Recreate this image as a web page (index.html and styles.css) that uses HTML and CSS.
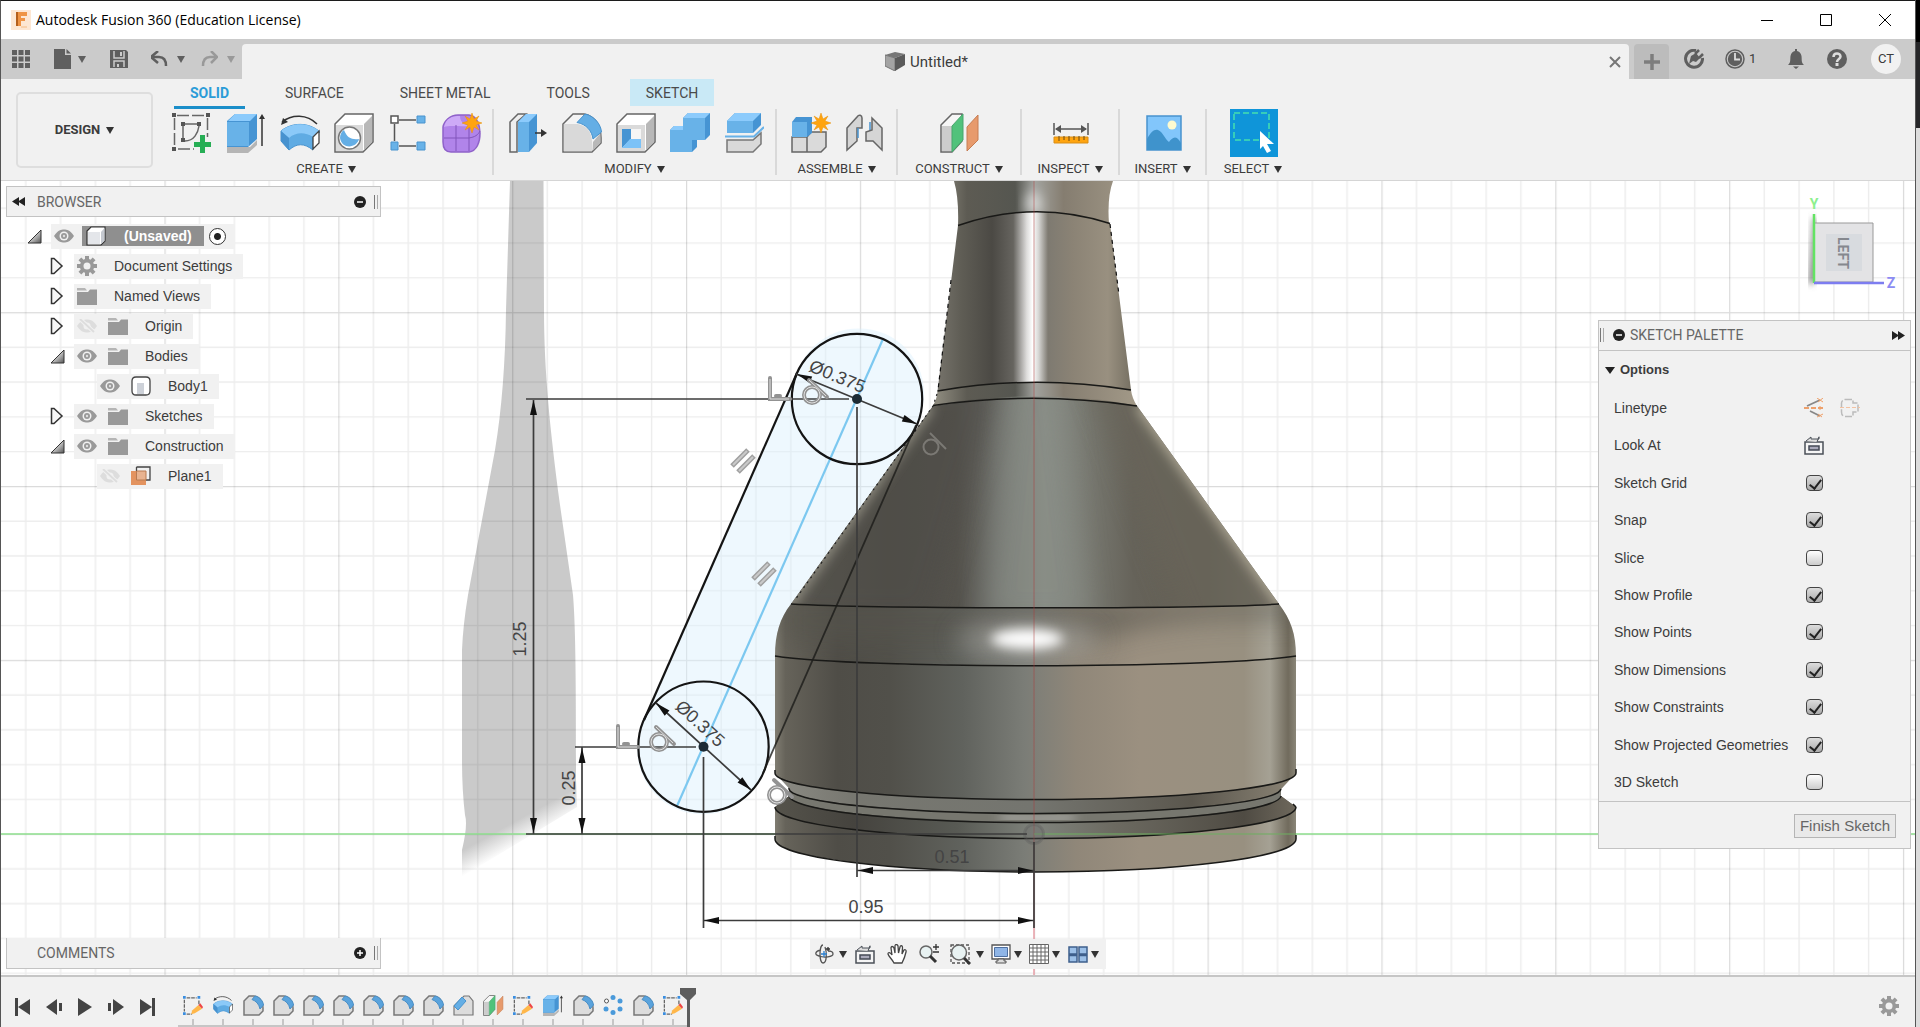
FILE: index.html
```html
<!DOCTYPE html>
<html lang="en">
<head>
<meta charset="utf-8">
<title>Autodesk Fusion 360 (Education License)</title>
<link rel="stylesheet" href="styles.css">
</head>
<body>
<svg class="defs" aria-hidden="true">
  <defs>
    <linearGradient id="tri" x1="0" y1="0" x2="1" y2="1"><stop offset="0.3" stop-color="#eee"/><stop offset="1" stop-color="#555"/></linearGradient>
    <symbol id="eye" viewBox="0 0 20 14"><path d="M0 7C4 1 7 0.500 10 0.500S16 1 20 7C16 13 13 13.500 10 13.500S4 13 0 7Z" fill="#999"/><circle cx="10" cy="7" r="4.500" fill="#f1f1f1"/><circle cx="10" cy="7" r="3" fill="#999"/><circle cx="10" cy="7" r="1.200" fill="#ddd"/></symbol>
    <symbol id="eye-off" viewBox="0 0 20 14"><path d="M0 7C4 1 7 0.500 10 0.500S16 1 20 7C16 13 13 13.500 10 13.500S4 13 0 7Z" fill="#ddd"/><circle cx="10" cy="7" r="3.500" fill="#f1f1f1"/><path d="M3 0L18 14" stroke="#f1f1f1" stroke-width="4"/><path d="M3 0L17 13" stroke="#ddd" stroke-width="1.800"/></symbol>
    <symbol id="folder" viewBox="0 0 20 17"><path d="M0 0H8L10 2.500H0Z" fill="#b5b5b5"/><path d="M0 4H11L13 1.500H20V17H0Z" fill="#999"/></symbol>
    <symbol id="closed" viewBox="0 0 14 18"><path d="M1.500 1.500H4L12 9L4 16.500H1.500Z" fill="#f6f6f6" stroke="#333" stroke-width="1.500"/></symbol>
    <symbol id="open" viewBox="0 0 15 15"><path d="M14 1V14H1Z" fill="url(#tri)" stroke="#333"/></symbol>
    <symbol id="gear" viewBox="0 0 20 20"><g fill="#999"><path d="M8 0H12V20H8ZM0 8V12H20V8ZM1.500 4.300L4.300 1.500L18.500 15.700L15.700 18.500ZM15.700 1.500L18.500 4.300L4.300 18.500L1.500 15.700Z"/><circle cx="10" cy="10" r="7.200"/></g><circle cx="10" cy="10" r="3.500" fill="#f1f1f1"/></symbol>
    <symbol id="fillet" viewBox="0 0 40 40"><path d="M1 11L11 1H22C33 3 39 13 39 25V30L30 39H1Z" fill="#f4f4f4" stroke="#666" stroke-width="1.500"/><path d="M1.800 11H16C25 13 30 19 30 29V38.300H1.800Z" fill="#d9d9d9"/><path d="M31 29L38.500 20V30L30.500 38Z" fill="#b8b8b8"/><path d="M15 9.500L23 1C33 3 39 12 39.500 19L31 26C30 18 24 11 15 9.500Z" fill="#64aee5" stroke="#4893ce"/></symbol>
    <symbol id="fillet-small" viewBox="0 0 21 21"><path d="M1 6L6 1H11C17 2 20 7 20 13V16L16 20H1Z" fill="#dcdcdc" stroke="#777" stroke-width="1.500"/><path d="M9 4.500L12 1C17 2 20 6 20.500 10L17 14C16 9 13 6 9 4.500Z" fill="#5aa3dc" stroke="#4a8fc6"/></symbol>
    <symbol id="sketch-edit" viewBox="0 0 22 22"><path d="M4 2H15M1.500 4V17M17.500 5V10M4 20H10" stroke="#666" stroke-width="1.400" stroke-dasharray="4 1"/><path d="M0 0H3V3H0ZM16 0H19V3H16ZM0 18H3V21H0Z" fill="#3a8ee0"/><path d="M9 20L10 16L17 10L21 14L13 19Z" fill="#ffb74a"/><path d="M17 10L19 8L22 12L21 14Z" fill="#e44"/></symbol>
    <symbol id="planes" viewBox="0 0 40 40"><path d="M1 12L12 1H22V28L12 39H1Z" fill="#f6f6f6" stroke="#666" stroke-width="1.500"/><path d="M2 13H12V38H2Z" fill="#ccc"/><path d="M12 13L23 1V27L12 39Z" fill="#51c27b" stroke="#48a56c"/><path d="M27 14L38 2V27L27 38Z" fill="#e79a6c" stroke="#c67d52"/></symbol>
    <symbol id="extrude" viewBox="0 0 38 40"><path d="M0 34H23L30 27V32L21 40H0Z" fill="#b5b5b5"/><path d="M0 8L8 1H30V26L21 34H0Z" fill="#4694d3"/><path d="M0 9H22V33H0Z" fill="#68b2e8"/><path d="M1 8L8 1H30L23 8Z" fill="#8ccbfc"/><path d="M35 33V4" stroke="#333" stroke-width="1.500"/><path d="M32 6L35 1L38 6Z" fill="#333"/></symbol>
    <symbol id="revolve" viewBox="0 0 40 40"><path d="M2 9C12 1 27 1 37 11" fill="none" stroke="#333" stroke-width="1.500"/><path d="M1 12L3 5L8 9Z" fill="#333"/><path d="M1 18C12 9 29 9 40 19L33 24V37C24 30 17 30 9 37L1 28Z" fill="#5fabe3" stroke="#4893ce"/><path d="M1 18C12 9 29 9 40 19L33 24C25 19 16 19 9 25Z" fill="#8bc9f8"/><path d="M9 25V37L1 28V18Z" fill="#4792cf"/><path d="M33 24L39 18V30L33 36Z" fill="#fff" stroke="#444" stroke-width="1.300"/></symbol>
    <symbol id="star" viewBox="0 0 20 20"><path d="M10 0L12 6L17 3L14 8L20 10L14 12L17 17L12 14L10 20L8 14L3 17L6 12L0 10L6 8L3 3L8 6Z" fill="#ffa40f" stroke="#e8900a" stroke-width=".500"/></symbol>
    <symbol id="cad-box" viewBox="0 0 20 20"><path d="M1 5L5 1H19V15L15 19H1Z" fill="#fff" stroke="#333" stroke-width="1.200"/><path d="M2 6H14V18H2Z" fill="#e4e6ea"/><path d="M15 6L18.500 2V15L15 18Z" fill="#c5c9d0"/></symbol>
    <symbol id="look" viewBox="0 0 20 19"><path d="M1 6H19V18H1Z" fill="#f5f5f5" stroke="#4b5058" stroke-width="1.500"/><path d="M2 5L7 1V3H15V0.800L13 6" fill="#ddd" stroke="#4b5058"/><path d="M5 10H15V14H5Z" fill="#aab" stroke="#444a55" stroke-width="1.500"/></symbol>
  </defs>
</svg>

<div class="window">
  <header class="titlebar">
    <svg class="logo" width="20" height="20" viewBox="0 0 20 20"><rect width="20" height="20" fill="#fde7d3"/><path d="M5 2H16V6H10V8H14V11H10V16H5Z" fill="#ef9445"/><path d="M5 2H7V16H5Z" fill="#b4601d"/><path d="M10 17H16" stroke="#f5bd86"/></svg>
    <h1>Autodesk Fusion 360 (Education License)</h1>
    <div class="window-buttons">
      <button aria-label="Minimize"><svg width="14" height="14"><path d="M1 7.500H13" stroke="#000"/></svg></button>
      <button aria-label="Maximize"><svg width="14" height="14"><path d="M1.500 1.500H12.500V12.500H1.500Z" fill="none" stroke="#000"/></svg></button>
      <button aria-label="Close"><svg width="14" height="14"><path d="M1 1L13 13M13 1L1 13" stroke="#000"/></svg></button>
    </div>
  </header>

  <div class="appbar">
    <nav class="quick">
      <button class="q-grid" aria-label="Data panel"><svg width="18" height="18" fill="#5f5f5f"><path d="M0 0H5V5H0ZM6.500 0H11.500V5H6.500ZM13 0H18V5H13ZM0 6.500H5V11.500H0ZM6.500 6.500H11.500V11.500H6.500ZM13 6.500H18V11.500H13ZM0 13H5V18H0ZM6.500 13H11.500V18H6.500ZM13 13H18V18H13Z"/></svg></button>
      <button class="q-file" aria-label="File"><svg width="17" height="20"><path d="M0 0H11V6H17V20H0Z" fill="#5f5f5f"/><path d="M12.500 0L17 4.500H12.500Z" fill="#5f5f5f"/></svg><i class="caret"></i></button>
      <button class="q-save" aria-label="Save"><svg width="18" height="18"><path d="M0 0H16L18 2V18H0Z" fill="#5f5f5f"/><path d="M4 1V8H14V1M4 17V11H14V17" fill="none" stroke="#cbcbcb" stroke-width="1.500"/><path d="M10 2H12V6H10ZM7 14H9V17H7Z" fill="#cbcbcb"/></svg></button>
      <button class="q-undo" aria-label="Undo"><svg width="17" height="16"><path d="M2 6H8C13 6 15 9 15 15" fill="none" stroke="#5f5f5f" stroke-width="2.500"/><path d="M7 0L0 6L7 12" fill="none" stroke="#5f5f5f" stroke-width="2.500"/></svg><i class="caret"></i></button>
      <button class="q-redo" aria-label="Redo"><svg width="17" height="16"><path d="M15 6H9C4 6 2 9 2 15" fill="none" stroke="#999" stroke-width="2.500"/><path d="M10 0L16 6L10 12" fill="none" stroke="#999" stroke-width="2.500"/></svg><i class="caret pale"></i></button>
    </nav>
    <div class="doc-tab">
      <div class="doc-title">
        <svg width="20" height="19"><path d="M0 3L10 0L20 2L10 6Z" fill="#777"/><path d="M0 3L10 6V19L0 14Z" fill="#a3a3a3" stroke="#777"/><path d="M10 6L20 2V13L10 19Z" fill="#5a5a5a"/></svg>
        <span>Untitled*</span>
      </div>
      <button aria-label="Close document"><svg width="12" height="12"><path d="M1 1L11 11M11 1L1 11" stroke="#777" stroke-width="2"/></svg></button>
    </div>
    <div class="account">
      <button class="add-doc" aria-label="New design"><svg width="16" height="16"><path d="M8 0V16M0 8H16" stroke="#7d7d7d" stroke-width="3.500"/></svg></button>
      <button class="plug" aria-label="Extensions"><svg width="20" height="20"><path d="M12 1.500A8.500 8.500 0 1 0 18.500 9" fill="none" stroke="#5f5f5f" stroke-width="3"/><path d="M5 15L7 7L12 4L16 9L12 13L9 12Z" fill="#5f5f5f"/><path d="M11 5L15 1M15 9L19 5" stroke="#5f5f5f" stroke-width="2.500"/></svg></button>
      <button class="jobs" aria-label="Job status"><svg width="20" height="20"><circle cx="10" cy="10" r="9" fill="none" stroke="#5f5f5f" stroke-width="1.500"/><circle cx="10" cy="10" r="7.200" fill="#5f5f5f"/><path d="M10 4V10.500H15" fill="none" stroke="#ddd" stroke-width="1.800"/></svg><span>1</span></button>
      <button class="bell" aria-label="Notifications"><svg width="18" height="20"><path d="M1 16C4 13 3 11 3.500 7C4 4 6 2.500 8 2V0H10V2C12 2.500 14 4 14.500 7C15 11 14 13 17 16ZM6 17.500H12L9 20Z" fill="#5f5f5f"/></svg></button>
      <button class="help" aria-label="Help"><svg width="20" height="20"><circle cx="10" cy="10" r="10" fill="#5f5f5f"/><path d="M6.500 8C6.500 3 13.500 3.500 13.500 7.500C13.500 10 10 10 10 13" fill="none" stroke="#ddd" stroke-width="2.500"/><path d="M8.500 14H11.500V17H8.500Z" fill="#ddd"/></svg></button>
      <button class="avatar">CT</button>
    </div>
  </div>

  <div class="ribbon">
    <button class="workspace">DESIGN <i class="caret dark"></i></button>
    <div class="ribbon-main">
      <nav class="tabs">
        <a href="#solid" class="active">SOLID</a><a href="#surface">SURFACE</a><a href="#sheet">SHEET METAL</a><a href="#tools">TOOLS</a><a href="#sketch" class="context">SKETCH</a>
      </nav>
      <div class="groups">
        <section class="g-create">
          <div class="icons">
            <button aria-label="Create Sketch"><svg width="40" height="40"><path d="M5 2.500H33M2.500 5V33M35.500 5V24M6 36H22" stroke="#666" stroke-dasharray="12 3" stroke-width="1.500"/><path d="M0 0H4V4H0ZM34 0H38V4H34ZM0 34H4V38H0ZM9 9H13V13H9ZM25 9H29V13H25ZM9 25H13V29H9Z" fill="#555"/><path d="M13 11H25M11 13V25M13 28C22 28 26 20 27 13" fill="none" stroke="#666" stroke-width="1.500"/><path d="M28 22H33V29H39V34H33V40H28V34H22V29H28Z" fill="#27ae55"/></svg></button>
            <button aria-label="Extrude"><svg width="38" height="40"><use href="#extrude"/></svg></button>
            <button aria-label="Revolve"><svg width="40" height="40"><use href="#revolve"/></svg></button>
            <button aria-label="Hole"><svg width="40" height="40"><path d="M1 11L11 1H39V29L29 39H1Z" fill="#fff" stroke="#666" stroke-width="1.500"/><path d="M2 12H29V38H2Z" fill="#dadada"/><path d="M30 11L38 3V29L30 37Z" fill="#b8b8b8"/><circle cx="15.500" cy="25" r="11" fill="#fff" stroke="#777" stroke-width="1.500"/><path d="M10 17C13 25 18 27 25 26C23 35 8 37 6 25C6 21 8 18 10 17Z" fill="#64aee5"/></svg></button>
            <button aria-label="Pattern"><svg width="36" height="36"><path d="M9 5H26M4.500 9V26M9 31H26" stroke="#555" stroke-width="1.500"/><path d="M1 1H8V8H1Z" fill="#fff" stroke="#555" stroke-width="1.500"/><path d="M27 1H35V8H27ZM1 27H8V35H1ZM27 27H35V35H27Z" fill="#68b2e8" stroke="#4893ce"/></svg></button>
            <button aria-label="Create Form"><svg width="40" height="40"><path d="M1 14C2 8 8 2 16 2H27C35 3 38 12 38 20C38 29 35 38 27 39H9C3 39 1 35 1 29Z" fill="#b184ea" stroke="#8f62c9" stroke-width="1.500"/><path d="M2 14C4 5 10 3 18 3C18 10 24 12 27 13C18 14 8 12 2 14Z" fill="#cdaaf7"/><path d="M14 12V38M2 25H27C33 24 36 22 38 18M27 13V38" fill="none" stroke="#8155bb"/><use href="#star" x="20" y="0" width="20" height="20"/></svg></button>
          </div>
          <button class="menu">CREATE <i class="caret dark"></i></button>
        </section>
        <section class="g-modify">
          <div class="icons">
            <button aria-label="Press Pull"><svg width="38" height="40"><path d="M1 9L9 1H17L8 9V39H1Z" fill="#eee" stroke="#666" stroke-width="1.500"/><path d="M9 9L17 1H28V30L20 39H9Z" fill="#4694d3"/><path d="M9 9H20V39H9Z" fill="#68b2e8"/><path d="M9 9L17 1H28L20 9Z" fill="#8ccbfc"/><path d="M26 20H34" stroke="#333" stroke-width="1.500"/><path d="M32 16L38 20L32 24Z" fill="#333"/></svg></button>
            <button aria-label="Fillet"><svg width="40" height="40"><use href="#fillet"/></svg></button>
            <button aria-label="Shell"><svg width="40" height="40"><path d="M1 11L11 1H39V29L29 39H1Z" fill="#fff" stroke="#666" stroke-width="1.500"/><path d="M2 12H29V38H2Z" fill="#dadada"/><path d="M30 11L38 3V29L30 37Z" fill="#b8b8b8"/><path d="M6 16H25V35H6Z" fill="#f5f5f5"/><path d="M6 16L15 16V26L6 35Z" fill="#4694d3"/><path d="M6 35L14 26H25V35Z" fill="#7cc2f7"/></svg></button>
            <button aria-label="Combine"><svg width="40" height="40"><path d="M0 17L4 13H13V5L18 0H40V22L35 27H27V34L22 39H0Z" fill="#4694d3"/><path d="M0 17H13V5H35V27H22V39H0Z" fill="#68b2e8"/><path d="M13 5L18 0H40L35 5ZM0 17L4 13H13V17Z" fill="#8ccbfc"/></svg></button>
            <button aria-label="Split Body"><svg width="40" height="40"><path d="M3 8L11 0H37V12L29 20H3Z" fill="#4694d3"/><path d="M3 8H29V20H3Z" fill="#68b2e8"/><path d="M3 8L11 0H37L29 8Z" fill="#8ccbfc"/><path d="M1 23.500H30L40 14" fill="none" stroke="#68b2e8" stroke-width="2"/><path d="M3 27H29L37 20V31L29 39H3Z" fill="#d9d9d9" stroke="#777" stroke-width="1.500"/></svg></button>
          </div>
          <button class="menu">MODIFY <i class="caret dark"></i></button>
        </section>
        <section class="g-assemble">
          <div class="icons">
            <button aria-label="New Component"><svg width="40" height="40"><path d="M1 24H16V39H1ZM16 24L20 19H35V34L30 39H16Z" fill="#dadada" stroke="#666" stroke-width="1.500"/><path d="M1 9L5 4H21V20L16 24H1Z" fill="#4694d3"/><path d="M1 9H16V24H1Z" fill="#68b2e8"/><use href="#star" x="20" y="0" width="20" height="20"/></svg></button>
            <button aria-label="Joint"><svg width="38" height="38"><path d="M1 14L11 3C13 0 16 1 16 4V14H11V27L1 36Z" fill="#d5d5d5" stroke="#666" stroke-width="1.500"/><path d="M12 14V24M24 8V18" stroke="#4893ce" stroke-width="1.500"/><path d="M26 4L36 14V36L27 27H20V18L26 16Z" fill="#d5d5d5" stroke="#666" stroke-width="1.500"/></svg></button>
          </div>
          <button class="menu">ASSEMBLE <i class="caret dark"></i></button>
        </section>
        <section class="g-construct">
          <div class="icons"><button aria-label="Offset Plane"><svg width="40" height="40"><use href="#planes"/></svg></button></div>
          <button class="menu">CONSTRUCT <i class="caret dark"></i></button>
        </section>
        <section class="g-inspect">
          <div class="icons"><button aria-label="Measure"><svg width="36" height="36"><path d="M1 8V20M35 8V20M3 14H33" stroke="#555" stroke-width="1.500"/><path d="M2 14L8 10V18ZM34 14L28 10V18Z" fill="#555"/><path d="M1 22H35V28H1Z" fill="#ffa40f" stroke="#d98e16"/><path d="M6 21V26M11 21V25M16 21V26M21 21V25M26 21V26M31 21V25" stroke="#6b4b13"/></svg></button></div>
          <button class="menu">INSPECT <i class="caret dark"></i></button>
        </section>
        <section class="g-insert">
          <div class="icons"><button aria-label="Insert image"><svg width="36" height="36"><path d="M1 1H35V35H1Z" fill="#82c6fb" stroke="#4893ce" stroke-width="1.500"/><circle cx="26" cy="10" r="4.500" fill="#fdfbd0"/><path d="M1 24C5 17 8 14 12 15C17 17 19 24 23 27C26 23 30 19 35 28V35H1Z" fill="#3f93cc"/></svg></button></div>
          <button class="menu">INSERT <i class="caret dark"></i></button>
        </section>
        <section class="g-select">
          <div class="icons"><button class="chosen" aria-label="Select"><svg width="48" height="48"><path d="M4 4H39V31H4Z" fill="none" stroke="#45e0ae" stroke-width="1.500" stroke-dasharray="6 3"/><path d="M30 22L44 35H37L41 42L37 44L33 37L30 40Z" fill="#fff"/></svg></button></div>
          <button class="menu">SELECT <i class="caret dark"></i></button>
        </section>
      </div>
    </div>
  </div>

  <main class="canvas">
    <svg class="scene" viewBox="1 181 1914 794" preserveAspectRatio="xMidYMid slice">
      <defs>
        <pattern id="grid" x="1033.700" y="833.700" width="173.850" height="173.850" patternUnits="userSpaceOnUse">
          <path d="M35.200 0V174M70 0V174M104.800 0V174M139.500 0V174M0 35.200H174M0 70H174M0 104.800H174M0 139.500H174" stroke="#000" stroke-opacity=".070" stroke-width="1.400"/>
          <path d="M.500 0V174M0 .500H174" stroke="#000" stroke-opacity=".140" stroke-width="1.400"/>
        </pattern>
        <linearGradient id="cyl" gradientUnits="userSpaceOnUse" x1="775" x2="1296" y1="0" y2="0">
          <stop offset="0" stop-color="#807d72"/><stop offset=".02" stop-color="#66635a"/><stop offset=".12" stop-color="#4f4d47"/><stop offset=".22" stop-color="#51504a"/><stop offset=".36" stop-color="#60625d"/><stop offset=".48" stop-color="#7b7d77"/><stop offset=".58" stop-color="#908779"/><stop offset=".7" stop-color="#9b9080"/><stop offset=".9" stop-color="#989080"/><stop offset=".95" stop-color="#a5a194"/><stop offset=".985" stop-color="#716b5d"/><stop offset="1" stop-color="#8a8678"/>
        </linearGradient>
        <linearGradient id="cone" gradientUnits="userSpaceOnUse" x1="790" x2="1280" y1="0" y2="0">
          <stop offset="0" stop-color="#5f5d54"/><stop offset=".2" stop-color="#504e48"/><stop offset=".34" stop-color="#55534d"/><stop offset=".42" stop-color="#6d6e69"/><stop offset=".52" stop-color="#878b84"/><stop offset=".6" stop-color="#797a72"/><stop offset=".7" stop-color="#66635a"/><stop offset=".85" stop-color="#645f54"/><stop offset="1" stop-color="#7c776b"/>
        </linearGradient>
        <linearGradient id="neck" gradientUnits="userSpaceOnUse" x1="938" x2="1131" y1="0" y2="0">
          <stop offset="0" stop-color="#75726a"/><stop offset=".12" stop-color="#5f5d55"/><stop offset=".28" stop-color="#4b4944"/><stop offset=".39" stop-color="#66645f"/><stop offset=".46" stop-color="#dedddc"/><stop offset=".49" stop-color="#fff"/><stop offset=".52" stop-color="#d8d8d6"/><stop offset=".57" stop-color="#7e7a71"/><stop offset=".7" stop-color="#8b8375"/><stop offset=".88" stop-color="#999080"/><stop offset="1" stop-color="#777163"/>
        </linearGradient>
        <linearGradient id="collar" gradientUnits="userSpaceOnUse" x1="938" x2="1131" y1="0" y2="0">
          <stop offset="0" stop-color="#8b887c"/><stop offset=".15" stop-color="#5d5b53"/><stop offset=".4" stop-color="#555650"/><stop offset=".5" stop-color="#a2a39f"/><stop offset=".65" stop-color="#857d70"/><stop offset="1" stop-color="#a09786"/>
        </linearGradient>
        <linearGradient id="rim" gradientUnits="userSpaceOnUse" x1="775" x2="1296" y1="0" y2="0">
          <stop offset="0" stop-color="#8c8b84"/><stop offset=".15" stop-color="#777770"/><stop offset=".5" stop-color="#74756f"/><stop offset=".8" stop-color="#5b574e"/><stop offset="1" stop-color="#8b8475"/>
        </linearGradient>
        <linearGradient id="groove" gradientUnits="userSpaceOnUse" x1="775" x2="1296" y1="0" y2="0">
          <stop offset="0" stop-color="#55534b"/><stop offset=".15" stop-color="#45433e"/><stop offset=".35" stop-color="#585a54"/><stop offset=".5" stop-color="#7f837c"/><stop offset=".65" stop-color="#6c6a61"/><stop offset=".9" stop-color="#4f4b43"/><stop offset="1" stop-color="#6e685c"/>
        </linearGradient>
        <linearGradient id="fade" gradientUnits="userSpaceOnUse" x1="503" y1="828" x2="514" y2="848"><stop offset="0" stop-color="#cacaca"/><stop offset="1" stop-color="#cacaca" stop-opacity="0"/></linearGradient>
        <filter id="b4" x="-50%" y="-100%" width="200%" height="300%"><feGaussianBlur stdDeviation="6"/></filter>
        <filter id="b10" x="-50%" y="-50%" width="200%" height="200%"><feGaussianBlur stdDeviation="13"/></filter>
        <clipPath id="coneClip"><path d="M933 406C990 393 1080 393 1137 406L1279 604C1200 609 880 609 791 604Z"/></clipPath>
        <clipPath id="shoulderClip"><path id="shoulderPath" d="M791 604C880 609 1200 609 1279 604C1291 620 1296 634 1296 656C1210 669 860 669 775 656C775 634 780 618 791 604Z"/></clipPath>
        <g id="tangent"><path d="M-3 -15L15 2" stroke-width="4"/><circle r="8" stroke-width="4"/></g>
        <g id="perp"><path d="M2 0V21H22M8 18H12" stroke-width="4" fill="none"/></g>
        <path id="arrow" d="M0 0L-15 -3.500V3.500Z"/>
      </defs>
      <rect x="-600" y="-400" width="3200" height="2000" fill="#fff"/>
      <path d="M510 181H543.500L544 310C544 370 550 430 560 505L573 595C576 630 576 700 576 780L577 807L462 877V850Q468 825 465 815Q462 790 462 760V650Q463 625 468 595L495 450Q505 390 506 310Z" fill="url(#fade)"/>
      <rect x="-600" y="-400" width="3200" height="2000" fill="url(#grid)"/>
      <path d="M1 834H1915" stroke="#8fe08f" stroke-width="1.500"/>
      <path d="M1034 181V975" stroke="#eaa0a8" stroke-width="1.500"/>

      <path d="M797 373A65.200 65.200 0 1 1 916 425L763 773A65.200 65.200 0 1 1 644 720Z" fill="#d9effc" fill-opacity=".450"/>

      <g>
        <path d="M954 181H1113Q1107 197 1109 224Q1034 201 958 226Q959 198 954 181Z" fill="url(#collar)"/>
        <path d="M1026 206Q1026 194 1031 192H1037Q1041 197 1042 212H1026Z" fill="#fff" opacity=".600" filter="url(#b4)"/>
        <path d="M958 225.500Q1034 199 1110 223.500L1131 390Q1034 375 937.500 391Z" fill="url(#neck)"/>
        <path d="M937.500 391Q1034 374 1131 390Q1132 398 1137 406Q1034 391 933 405.500Q937 399 937.500 391Z" fill="url(#collar)"/>
        <path d="M933 406C990 396 1080 396 1137 406L1279 604C1200 609 880 609 791 604Z" fill="url(#cone)"/>
        <g clip-path="url(#coneClip)">
          <path d="M1000 380H910L760 620H930Z" fill="#504e48" opacity=".600" filter="url(#b10)"/>
          <path d="M1010 370H1060L1090 620H985Z" fill="#8a8f88" opacity=".600" filter="url(#b10)"/>
          <path d="M1085 370H1150L1320 640H1190Z" fill="#69655a" opacity=".700" filter="url(#b10)"/>
          <path d="M1141 404L1285 606" stroke="#aaa492" stroke-width="15" filter="url(#b4)"/>
          <path d="M929 404L786 606" stroke="#8f8c80" stroke-width="14" filter="url(#b4)"/>
        </g>
        <use href="#shoulderPath" fill="url(#cyl)"/>
        <g clip-path="url(#shoulderClip)">
          <path d="M780 600H1300V620Q1180 612 1100 640Q940 650 780 640Z" fill="#56544d" opacity=".600" filter="url(#b10)"/>
          <ellipse cx="1027" cy="639" rx="70" ry="18" fill="#b0b0ac" opacity=".600" filter="url(#b10)"/>
          <ellipse cx="1027" cy="639" rx="36" ry="10" fill="#fff" filter="url(#b4)"/>
        </g>
        <path d="M775 656C860 669 1210 669 1296 656V773A260.500 27 0 0 1 775 773Z" fill="url(#cyl)"/>
        <path d="M775 773C790 808 1280 808 1296 773L1281 789V796L1296 807V839L775 839V807L789 796V788Z" fill="url(#groove)"/>
        <path d="M775 773A260.500 26.500 0 0 0 1296 773L1281 789A246 24 0 0 1 789 788Z" fill="url(#rim)"/>
        <path d="M789 788A246 25 0 0 0 1281 789V796A246 26 0 0 1 789 795Z" fill="#77776f"/>
        <path d="M789 796A246 27 0 0 0 1281 796L1296 807A260.500 31 0 0 1 775 807Z" fill="url(#groove)"/>
        <path d="M1000 817Q1034 820 1075 817" stroke="#fff" stroke-width="3" fill="none" filter="url(#b4)"/>
        <path d="M775 807A260.500 31.500 0 0 0 1296 807V839A260.500 33 0 0 1 775 839Z" fill="url(#cyl)"/>
        <g fill="none" stroke="#191917" stroke-width="1.500">
          <path d="M958 225.500Q1034 199 1110 223.500M937.500 391Q1034 374 1131 390M933 405.500Q1034 391 1137 406M791 604C880 609 1200 609 1279 604M775 656C860 669 1210 669 1296 656"/>
          <path d="M775 773A260.500 26.500 0 0 0 1296 773M789 788A246 25 0 0 0 1281 789M789 795A246 27 0 0 0 1281 796M775 807A260.500 31.500 0 0 0 1296 807M775 839A260.500 33 0 0 0 1296 839"/>
          <path d="M775 773V770M1296 773V769M1296 807L1293 804M775 839V836M1296 839V835"/>
        </g>
        <path d="M951 280L938 390M1110 224L1119 295" stroke="#111" stroke-width="1.200" stroke-dasharray="4 4"/>
        <path d="M937 394L933 406L795 600" fill="none" stroke="#222" stroke-width="1.200" stroke-dasharray="2 4"/>
      </g>

      <path d="M1034 181V872" stroke="#b03838" stroke-opacity=".350" stroke-width="1.400"/>
      <path d="M1034 834H1296" stroke="#6fae62" stroke-opacity=".700" stroke-width="1.500"/>
      <circle cx="1034" cy="834" r="9.500" fill="#666" fill-opacity=".300" stroke="#555" stroke-opacity=".300" stroke-width="3"/>

      <path d="M883 339L677 806" stroke="#7cc8f0" stroke-width="2.200"/>
      <g fill="none" stroke="#141414" stroke-width="2.200">
        <circle cx="857" cy="399" r="65.200"/><circle cx="703.500" cy="746.700" r="65.200"/>
        <path d="M797 373L644 720"/><path d="M916 425L763 773" stroke="#1b1b19" stroke-opacity=".800" stroke-width="1.800"/>
      </g>

      <g stroke="#3c3c3c" stroke-width="1.700">
        <path d="M526 399H849M533.500 400V834M526 834H1027M575 747H696M582 747V834M857 407V877M703.500 757V928M1034 842V928M857 870.500H1034M703.500 920.500H1034M796 374L917 424M656 703L751 790"/>
      </g>
      <g fill="#111">
        <use href="#arrow" transform="translate(533.500 400) rotate(-90)"/><use href="#arrow" transform="translate(533.500 833) rotate(90)"/>
        <use href="#arrow" transform="translate(582 748) rotate(-90)"/><use href="#arrow" transform="translate(582 833) rotate(90)"/>
        <use href="#arrow" transform="translate(858 870.500) rotate(180)"/><use href="#arrow" transform="translate(1033 870.500)"/>
        <use href="#arrow" transform="translate(704 920.500) rotate(180)"/><use href="#arrow" transform="translate(1033 920.500)"/>
        <use href="#arrow" transform="translate(797 374) rotate(202.500)"/><use href="#arrow" transform="translate(917 424) rotate(22.500)"/>
        <use href="#arrow" transform="translate(656 703) rotate(222.500)"/><use href="#arrow" transform="translate(751 790) rotate(42.500)"/>
      </g>
      <circle cx="857" cy="399" r="5" fill="#1c2b35"/><circle cx="703.500" cy="746.700" r="5" fill="#1c2b35"/>

      <g fill="none" stroke="#929292" stroke-linecap="round">
        <use href="#tangent" transform="translate(812 395)"/><use href="#tangent" transform="translate(659 742)"/>
        <use href="#tangent" transform="translate(777 795)"/>
        <use href="#perp" x="768" y="378"/><use href="#perp" x="616" y="726"/>
        <path d="M732 466L748 450M738 472L754 456M753 579L769 563M759 585L775 569" stroke="#a0a0a0" stroke-width="5" stroke-linecap="butt"/>
      </g>
      <g fill="none" stroke="#e0e0e0" stroke-width="1">
        <circle cx="812" cy="395" r="8"/><circle cx="659" cy="742" r="8"/><circle cx="777" cy="795" r="8"/>
        <path d="M770 379V399H789M618 727V747H637M809 380L826 396M656 727L673 743"/>
        <path d="M733 465L747 451M739 471L753 457M754 578L768 564M760 584L774 570" stroke="#c9c9c9" stroke-width="2"/>
      </g>
      <g fill="none" stroke="#7b7974" stroke-width="2"><circle cx="931" cy="447" r="7.500"/><path d="M930 433L946 449"/></g>

      <g class="dims">
        <text transform="translate(526 639) rotate(-90)">1.25</text>
        <text transform="translate(575 788) rotate(-90)">0.25</text>
        <text x="866" y="913">0.95</text>
        <text x="952" y="863">0.51</text>
        <text transform="translate(835 382) rotate(22.500)">Ø0.375</text>
        <text transform="translate(696 728) rotate(42.500)">Ø0.375</text>
      </g>
    </svg>

    <div class="left-dock">
      <section class="browser">
        <header class="panel-head">
          <button aria-label="Collapse browser"><svg width="13" height="9"><path d="M7 0V9L0 4.500ZM13 0V9L6 4.500Z" fill="#222"/></svg></button>
          <h2>BROWSER</h2>
          <button aria-label="Minimize browser"><svg width="12" height="12"><circle cx="6" cy="6" r="6" fill="#222"/><path d="M3 6H9" stroke="#fff" stroke-width="1.500"/></svg></button>
          <i class="grip"></i>
        </header>
        <ul class="tree">
          <li class="root"><button class="tw" aria-label="Collapse"><svg width="15" height="15"><use href="#open"/></svg></button>
            <div class="node"><svg width="20" height="14"><use href="#eye"/></svg><span class="doc"><svg width="20" height="20"><use href="#cad-box"/></svg>(Unsaved)</span><input type="radio" name="active" aria-label="Activate component" checked></div></li>
          <li class="child"><button class="tw" aria-label="Expand"><svg width="14" height="18"><use href="#closed"/></svg></button><div class="node"><svg width="20" height="20"><use href="#gear"/></svg><span>Document Settings</span></div></li>
          <li class="child"><button class="tw" aria-label="Expand"><svg width="14" height="18"><use href="#closed"/></svg></button><div class="node"><svg width="20" height="17"><use href="#folder"/></svg><span>Named Views</span></div></li>
          <li class="child"><button class="tw" aria-label="Expand"><svg width="14" height="18"><use href="#closed"/></svg></button><div class="node"><svg width="20" height="14"><use href="#eye-off"/></svg><svg class="type" width="20" height="17"><use href="#folder"/></svg><span>Origin</span></div></li>
          <li class="child"><button class="tw" aria-label="Collapse"><svg width="15" height="15"><use href="#open"/></svg></button><div class="node"><svg width="20" height="14"><use href="#eye"/></svg><svg class="type" width="20" height="17"><use href="#folder"/></svg><span>Bodies</span></div></li>
          <li class="leaf"><div class="node"><svg width="20" height="14"><use href="#eye"/></svg><svg class="type" width="20" height="20"><path d="M1 5Q1 1 5 1H15Q19 1 19 5V15Q19 19 15 19H5Q1 19 1 15Z" fill="#fff" stroke="#444" stroke-width="1.300"/><path d="M6 7H13V18H6Z" fill="#cdd1d8"/></svg><span>Body1</span></div></li>
          <li class="child"><button class="tw" aria-label="Expand"><svg width="14" height="18"><use href="#closed"/></svg></button><div class="node"><svg width="20" height="14"><use href="#eye"/></svg><svg class="type" width="20" height="17"><use href="#folder"/></svg><span>Sketches</span></div></li>
          <li class="child"><button class="tw" aria-label="Collapse"><svg width="15" height="15"><use href="#open"/></svg></button><div class="node"><svg width="20" height="14"><use href="#eye"/></svg><svg class="type" width="20" height="17"><use href="#folder"/></svg><span>Construction</span></div></li>
          <li class="leaf"><div class="node"><svg width="20" height="14"><use href="#eye-off"/></svg><svg class="type" width="20" height="20"><path d="M5.500 1H19V14H15M5.500 1V5" fill="none" stroke="#444" stroke-width="1.300"/><path d="M0 5H15V19H0Z" fill="#e3935f"/><path d="M5.500 5H15V14H5.500Z" fill="#e8b390" stroke="#b87a50"/></svg><span>Plane1</span></div></li>
        </ul>
      </section>
      <section class="panel-head comments">
        <h2>COMMENTS</h2>
        <button aria-label="Open comments"><svg width="12" height="12"><circle cx="6" cy="6" r="6" fill="#222"/><path d="M3 6H9M6 3V9" stroke="#fff" stroke-width="1.500"/></svg></button>
        <i class="grip"></i>
      </section>
    </div>

    <nav class="viewbar">
      <button class="v-orbit" aria-label="Orbit"><svg width="20" height="20" fill="none" stroke="#555" stroke-width="1.300"><path d="M9 1C5 1 5 19 9 19S13 8 11 3M7 6C1 7 0 11 5 12C10 14 19 13 19 10S16 7 14 7"/><path d="M10 7V13M7 10H13" stroke="#2a7fd0"/><path d="M14 3V7M12 5H16" stroke="#333"/></svg><i class="caret dark"></i></button>
      <button class="v-plain" aria-label="Look At"><svg width="20" height="19"><use href="#look"/></svg></button>
      <button class="v-plain" aria-label="Pan"><svg width="20" height="20"><path d="M7 19C5 15 2 13 1 10C1 8 3 8 5 11L4 4C4 2 6 2 7 4L8 9V2C8 0 10.500 0 11 2L11.500 9L13 3C13.500 1 15.500 1.500 15.500 3.500L15 10L17 6C18 5 19.500 6 19 8C18 13 17 15 15 19Z" fill="#fff" stroke="#444" stroke-width="1.300"/></svg></button>
      <button class="v-plain" aria-label="Zoom"><svg width="21" height="20"><circle cx="7" cy="8" r="6" fill="#e8f2f2" stroke="#666" stroke-width="1.500"/><path d="M11 12L17 18" stroke="#333" stroke-width="3"/><path d="M17 0V6M14 3H20M14 8H20" stroke="#333" stroke-width="1.300"/></svg></button>
      <button class="v-fit" aria-label="Fit"><svg width="21" height="21"><path d="M1 1H19V19H1Z" fill="none" stroke="#555" stroke-dasharray="3 2" stroke-width="1.300"/><circle cx="9" cy="8.500" r="7.500" fill="#e8f2f2" stroke="#666" stroke-width="1.500"/><path d="M14 14L20 20" stroke="#333" stroke-width="3"/></svg><i class="caret dark"></i></button>
      <button class="v-menu" aria-label="Display settings"><svg width="20" height="20"><path d="M1 1H19V15H1Z" fill="#fff" stroke="#555" stroke-width="1.300"/><path d="M3.500 3.500H16.500V12.500H3.500Z" fill="#8fb5e6" stroke="#4e6f9f"/><path d="M7 15H13V17H15V19H5V17H7Z" fill="#ddd" stroke="#555"/></svg><i class="caret dark"></i></button>
      <button class="v-menu" aria-label="Grid settings"><svg width="20" height="20"><path d="M.500.500H19.500V19.500H.500ZM4 0V20M8 0V20M12 0V20M16 0V20M0 4H20M0 8H20M0 12H20M0 16H20" fill="#fff" stroke="#666"/></svg><i class="caret dark"></i></button>
      <button class="v-menu" aria-label="Viewports"><svg width="20" height="17"><path d="M1 1H9V8H1ZM11 1H19V8H11ZM1 9.500H9V16H1ZM11 9.500H19V16H11Z" fill="#9cc0e8" stroke="#3e5f8c" stroke-width="1.500"/></svg><i class="caret dark"></i></button>
    </nav>

    <div class="right-dock">
      <svg class="cube" width="104" height="104" viewBox="1800 195 104 104">
        <defs><filter id="sh"><feGaussianBlur stdDeviation="3"/></filter></defs>
        <path d="M1813 216L1809 286L1816 280V220Z" fill="#777" filter="url(#sh)"/>
        <path d="M1814 223H1873V282H1814Z" fill="#e3e3e5" stroke="#999"/>
        <path d="M1826 234H1862V271H1826Z" fill="#d8dbdf"/>
        <path d="M1814 214V283" stroke="#63e363" stroke-width="2.500"/><path d="M1814 283H1884" stroke="#7d7df0" stroke-width="2.500"/>
        <text x="1814" y="209" class="axis" fill="#8df08d">Y</text><text x="1891" y="288" class="axis" fill="#8b8bf3">Z</text>
        <text transform="translate(1838 253) rotate(90)" class="face">LEFT</text>
      </svg>
      <form class="palette">
        <header class="palette-head">
          <i class="grip"></i>
          <button type="button" aria-label="Minimize palette"><svg width="12" height="12"><circle cx="6" cy="6" r="6" fill="#222"/><path d="M3 6H9" stroke="#fff" stroke-width="1.500"/></svg></button>
          <h2>SKETCH PALETTE</h2>
          <button type="button" aria-label="Dock palette"><svg width="13" height="9"><path d="M0 0V9L7 4.500ZM6 0V9L13 4.500Z" fill="#222"/></svg></button>
        </header>
        <h3><i class="caret big"></i>Options</h3>
        <div class="options">
          <div class="opt"><span>Linetype</span><span class="ctl"><button type="button" aria-label="Construction"><svg width="20" height="20"><path d="M3 8L16 2M6 13L16 18" stroke="#888" stroke-width="1.800"/><path d="M0 10H20" stroke="#ec8540" stroke-width="1.300" stroke-dasharray="5 2"/><path d="M13 0L19 4M19 0L14 4M13 19L19 16M18 19L14 16M16 8V12" stroke="#efa069"/></svg></button><button type="button" aria-label="Centerline"><svg width="20" height="20"><path d="M5 1.500H13V5H18V14H13V18.500H5Q1.500 18 1.500 14V5Q2 2 5 1.500Z" fill="none" stroke="#bbb" stroke-width="1.500" stroke-dasharray="7 2"/><path d="M0 9.500H20" stroke="#f3c2a2" stroke-dasharray="4 2"/></svg></button></span></div>
          <div class="opt"><span>Look At</span><span class="ctl"><button type="button" aria-label="Look At"><svg width="20" height="19"><use href="#look"/></svg></button></span></div>
          <label class="opt"><span>Sketch Grid</span><input type="checkbox" checked></label>
          <label class="opt"><span>Snap</span><input type="checkbox" checked></label>
          <label class="opt"><span>Slice</span><input type="checkbox"></label>
          <label class="opt"><span>Show Profile</span><input type="checkbox" checked></label>
          <label class="opt"><span>Show Points</span><input type="checkbox" checked></label>
          <label class="opt"><span>Show Dimensions</span><input type="checkbox" checked></label>
          <label class="opt"><span>Show Constraints</span><input type="checkbox" checked></label>
          <label class="opt"><span>Show Projected Geometries</span><input type="checkbox" checked></label>
          <label class="opt"><span>3D Sketch</span><input type="checkbox"></label>
        </div>
        <footer><button type="button" class="finish">Finish Sketch</button></footer>
      </form>
    </div>
  </main>

  <footer class="timeline">
    <div class="playback">
      <button aria-label="To start"><svg width="16" height="18" fill="#444"><path d="M0 0H3V18H0ZM15 1V17L3 9Z"/></svg></button>
      <button aria-label="Step back"><svg width="16" height="16" fill="#444"><path d="M11 0V16L0 8ZM13 4H16V12H13Z"/></svg></button>
      <button aria-label="Play"><svg width="15" height="18" fill="#444"><path d="M1 0L15 9L1 18Z"/></svg></button>
      <button aria-label="Step forward"><svg width="16" height="16" fill="#444"><path d="M5 0L16 8L5 16ZM0 4H3V12H0Z"/></svg></button>
      <button aria-label="To end"><svg width="16" height="18" fill="#444"><path d="M13 0H16V18H13ZM1 1L13 9L1 17Z"/></svg></button>
    </div>
    <ol class="features">
      <li><svg width="20" height="22"><use href="#sketch-edit"/></svg></li>
      <li><svg width="20" height="20"><use href="#revolve"/></svg></li>
      <li><svg width="21" height="21"><use href="#fillet-small"/></svg></li>
      <li><svg width="21" height="21"><use href="#fillet-small"/></svg></li>
      <li><svg width="21" height="21"><use href="#fillet-small"/></svg></li>
      <li><svg width="21" height="21"><use href="#fillet-small"/></svg></li>
      <li><svg width="21" height="21"><use href="#fillet-small"/></svg></li>
      <li><svg width="21" height="21"><use href="#fillet-small"/></svg></li>
      <li><svg width="21" height="21"><use href="#fillet-small"/></svg></li>
      <li><svg width="21" height="21"><path d="M1 11L11 1H16L20 6V20H1Z" fill="#dcdcdc" stroke="#777" stroke-width="1.200"/><path d="M1 11L9 2L13 6L5 15Z" fill="#64aee5" stroke="#4893ce"/></svg></li>
      <li><svg width="21" height="21"><use href="#planes"/></svg></li>
      <li><svg width="20" height="22"><use href="#sketch-edit"/></svg></li>
      <li><svg width="20" height="21"><use href="#extrude"/></svg></li>
      <li><svg width="21" height="21"><use href="#fillet-small"/></svg></li>
      <li><svg width="20" height="20" fill="#4a9ada"><circle cx="10" cy="2.500" r="2.500"/><circle cx="17" cy="6" r="2.500"/><circle cx="17" cy="14" r="2.500"/><circle cx="10" cy="17.500" r="2.500"/><circle cx="3" cy="14" r="2.500"/><circle cx="3.500" cy="6" r="2" fill="#fff" stroke="#555"/></svg></li>
      <li><svg width="21" height="21"><use href="#fillet-small"/></svg></li>
      <li><svg width="20" height="22"><use href="#sketch-edit"/></svg></li>
    </ol>
    <svg class="marker" width="16" height="40"><path d="M0 0H16V6L10 12V40H7V12L0 6Z" fill="#5d5d5d"/></svg>
    <button class="settings" aria-label="Timeline settings"><svg width="20" height="20"><use href="#gear"/></svg></button>
  </footer>
</div>
<div class="behind"></div>
</body>
</html>
```
FILE: styles.css
```css
* { box-sizing: border-box; }
body {
  margin: 0;
  display: flex;
  height: 100vh;
  overflow: hidden;
  background: #f1f1f1;
  color: #3c3c3c;
  font: 14px/20px "Liberation Sans", Arial, sans-serif;
}
button { border: 0; padding: 0; margin: 0; background: none; color: inherit; font: inherit; display: flex; align-items: center; }
h1, h2, h3, ul, ol { margin: 0; padding: 0; font-weight: normal; list-style: none; }
svg { display: block; flex: none; }
.defs { position: absolute; width: 0; height: 0; }

.window { flex: 1; min-width: 0; display: flex; flex-direction: column; border: 1px solid #555; border-top-color: #1c1c1c; border-bottom: 0; border-right: 0; }
.behind { width: 5px; border-left: 1px solid #555; background: linear-gradient(#000 42px, #262628 42px, #262628 128px, #dcdcdc 128px); }

.caret { width: 0; height: 0; border: 4px solid transparent; border-top: 7px solid #5f5f5f; border-bottom: 0; }
.caret.pale { border-top-color: #999; }
.caret.dark { border-top-color: #333; }
.caret.big { border-width: 7px 5px 0; border-top-color: #222; }

/* Title bar */
.titlebar { height: 38px; display: flex; align-items: center; padding: 0 1px 0 10px; gap: 5px; background: #fff; }
.titlebar h1 { flex: 1; font: 14px/20px "Open Sans", sans-serif; color: #000; }
.window-buttons { display: flex; }
.window-buttons button { width: 59px; height: 38px; justify-content: center; }

/* Application bar */
.appbar { height: 40px; display: flex; align-items: flex-end; background: #cbcbcb; }
.quick { width: 241px; height: 40px; display: flex; align-items: center; padding-left: 11px; }
.quick button { gap: 7px; }
.q-grid { width: 42px; }
.q-file { width: 56px; }
.q-save { width: 41px; }
.q-undo { width: 50px; }
.quick .q-undo, .quick .q-redo { gap: 9px; }
.doc-tab { flex: 1; height: 35px; display: flex; align-items: center; padding-right: 8px; background: #f1f1f1; border-radius: 4px 4px 0 0; }
.doc-title { flex: 1; display: flex; justify-content: center; align-items: center; gap: 5px; padding-left: 2px; font: 15px/20px Roboto, sans-serif; }
.account { width: 286px; height: 40px; display: flex; align-items: center; padding: 0 14px 0 5px; }
.account button { justify-content: center; }
.account .add-doc { width: 35px; height: 35px; align-self: flex-end; background: #bcbcbc; border-radius: 4px 4px 0 0; }
.account .plug { width: 50px; }
.account .jobs { width: 58px; padding-left: 6px; gap: 4px; justify-content: flex-start; font: 13px/20px Roboto, sans-serif; }
.account .bell { width: 38px; }
.account .help { width: 44px; }
.account .avatar { width: 30px; height: 30px; margin-left: auto; border-radius: 15px; background: #f1f1f1; font: 13px/20px Roboto, sans-serif; }

/* Ribbon */
.ribbon { height: 102px; display: flex; background: #f1f1f1; border-bottom: 1px solid #d5d5d5; font-family: Roboto, sans-serif; }
.workspace { width: 137px; height: 76px; margin: 13px 7px 0 15px; border: 2px solid #dedede; border-radius: 5px; justify-content: center; gap: 6px; font-weight: bold; font-size: 13px; }
.tabs { display: flex; gap: 24px; height: 30px; padding-left: 14px; }
.tabs a { padding: 4px 16px 0; height: 27px; color: #4a4a4a; text-decoration: none; }
.tabs .active { color: #2b9cd8; font-weight: bold; height: 30px; border-bottom: 3px solid #1b8ec9; }
.tabs .context { background: #c9e9f6; }
.groups { display: flex; }
.groups section { display: flex; flex-direction: column; align-items: center; height: 66px; border-right: 2px solid #d9d9d9; }
.groups .g-select { border-right: 0; }
.g-create { width: 334px; }
.g-modify { width: 283px; }
.g-assemble { width: 121px; }
.g-construct { width: 124px; }
.g-inspect { width: 98px; }
.g-insert { width: 87px; }
.g-select { width: 92px; }
.icons { display: flex; height: 48px; padding-left: 2px; }
.icons button { width: 54px; height: 48px; justify-content: center; }
.icons .chosen { width: 48px; background: #0f95d9; }
.menu { gap: 5px; height: 24px; font-size: 13px; flex: none; }

/* Design canvas */
.canvas { position: relative; flex: 1; min-height: 0; display: grid; grid-template-columns: 1fr auto 1fr; grid-template-rows: 100%; }
.scene { position: absolute; inset: 0; width: 100%; height: 100%; }
.left-dock, .viewbar, .right-dock { position: relative; }
.dims text { font: 18px "Liberation Sans", Arial, sans-serif; text-anchor: middle; fill: #444; }
.axis { font: bold 14px Roboto, sans-serif; text-anchor: middle; }
.face { font: bold 14px Roboto, sans-serif; text-anchor: middle; fill: #85888e; }

.left-dock { width: 380px; padding: 5px 0 6px 5px; display: flex; flex-direction: column; justify-content: space-between; }
.panel-head { display: flex; align-items: center; height: 31px; padding: 0 2px 0 5px; gap: 8px; background: #f1f1f1; border: 1px solid #c3c3c3; }
.panel-head h2, .palette-head h2 { flex: 1; font: 14px/20px Roboto, sans-serif; color: #666; }
.panel-head h2 { padding-left: 4px; }
.comments h2 { padding-left: 25px; }
.comments { border-top: 0; }
.grip { width: 4px; height: 14px; border: solid #777; border-width: 0 1px; border-right-color: #aaa; }

.tree { padding: 4px 0 0 21px; }
.tree li { display: flex; align-items: center; height: 30px; }
.tw { width: 24px; }
.tree .child { padding-left: 23px; }
.tree .leaf { padding-left: 70px; }
.node { display: flex; align-items: center; height: 25px; padding: 0 11px 0 3px; background: #f1f1f1; }
.node span { margin-left: 17px; }
.node .type { margin-left: 11px; }
.root .node { padding-right: 9px; }
.root .doc { display: flex; align-items: center; gap: 18px; height: 20px; margin: 0 5px 0 8px; padding: 0 12px 0 4px; background: #8f8f8f; color: #fff; font-weight: bold; }
.node input { appearance: none; width: 17px; height: 17px; margin: 0; border: 1px solid #333; border-radius: 9px; background: radial-gradient(#222 3px, #fff 4px); }

.viewbar { align-self: end; height: 30px; display: flex; align-items: center; width: 296px; margin: 0 0 6px; padding-left: 4px; background: #f1f1f1; }
.viewbar button { gap: 5px; }
.v-orbit { width: 42px; }
.v-plain { width: 32px; }
.v-fit { width: 41px; }
.v-menu { width: 39px; }
.viewbar .v-menu { gap: 3px; }

.right-dock { justify-self: end; width: 317px; padding: 14px 4px 0 0; display: flex; flex-direction: column; align-items: flex-end; gap: 21px; }
.cube { margin-right: 7px; }
.palette { width: 313px; background: #f1f1f1; border: 1px solid #c3c3c3; }
.palette-head { display: flex; align-items: center; height: 30px; padding: 0 5px 1px 1px; gap: 5px; border-bottom: 1px solid #c3c3c3; }
.palette-head .grip { margin-right: 4px; }
.palette h3 { display: flex; align-items: center; gap: 5px; height: 38px; padding-left: 6px; font-size: 13px; font-weight: bold; }
.options { display: grid; grid-auto-rows: 1fr; height: 412px; }
.opt { display: flex; align-items: center; padding-left: 15px; }
.opt > span:first-child { width: 192px; }
.ctl { display: flex; gap: 16px; margin-left: -2px; }
.opt input { appearance: none; position: relative; width: 17px; height: 16px; margin: 0; border: 1px solid #444; border-radius: 4px; background: linear-gradient(#fff, #ccc); }
.opt input:checked { background: linear-gradient(#ddd, #aaa); }
.opt input:checked::after { content: ""; position: absolute; left: 5px; top: 1px; width: 5px; height: 10px; border: solid #222; border-width: 0 2px 2px 0; transform: rotate(38deg); }
.palette footer { display: flex; justify-content: flex-end; height: 47px; padding: 12px 14px 0 0; border-top: 1px solid #c3c3c3; }
.finish { height: 24px; padding: 0 5px; border: 1px solid #b5b5b5; background: #e9e9e9; color: #666; font-size: 15px; }

/* Timeline */
.timeline { height: 52px; display: flex; border-top: 2px solid #c6c6c6; background: #f1f1f1; }
.playback { display: flex; padding-left: 6px; height: 60px; width: 177px; }
.playback button { width: 31px; justify-content: center; }
.features { display: flex; padding-top: 18px; }
.features li { width: 30px; height: 32px; border-bottom: 2px solid #c6c6c6; background: linear-gradient(#c6c6c6, #c6c6c6) 14px 24px / 2px 8px no-repeat; }
.features svg { margin: 0 auto; }
.marker { margin: 11px 0 0 -8px; }
.settings { margin: 0 16px 0 auto; height: 58px; }
```
